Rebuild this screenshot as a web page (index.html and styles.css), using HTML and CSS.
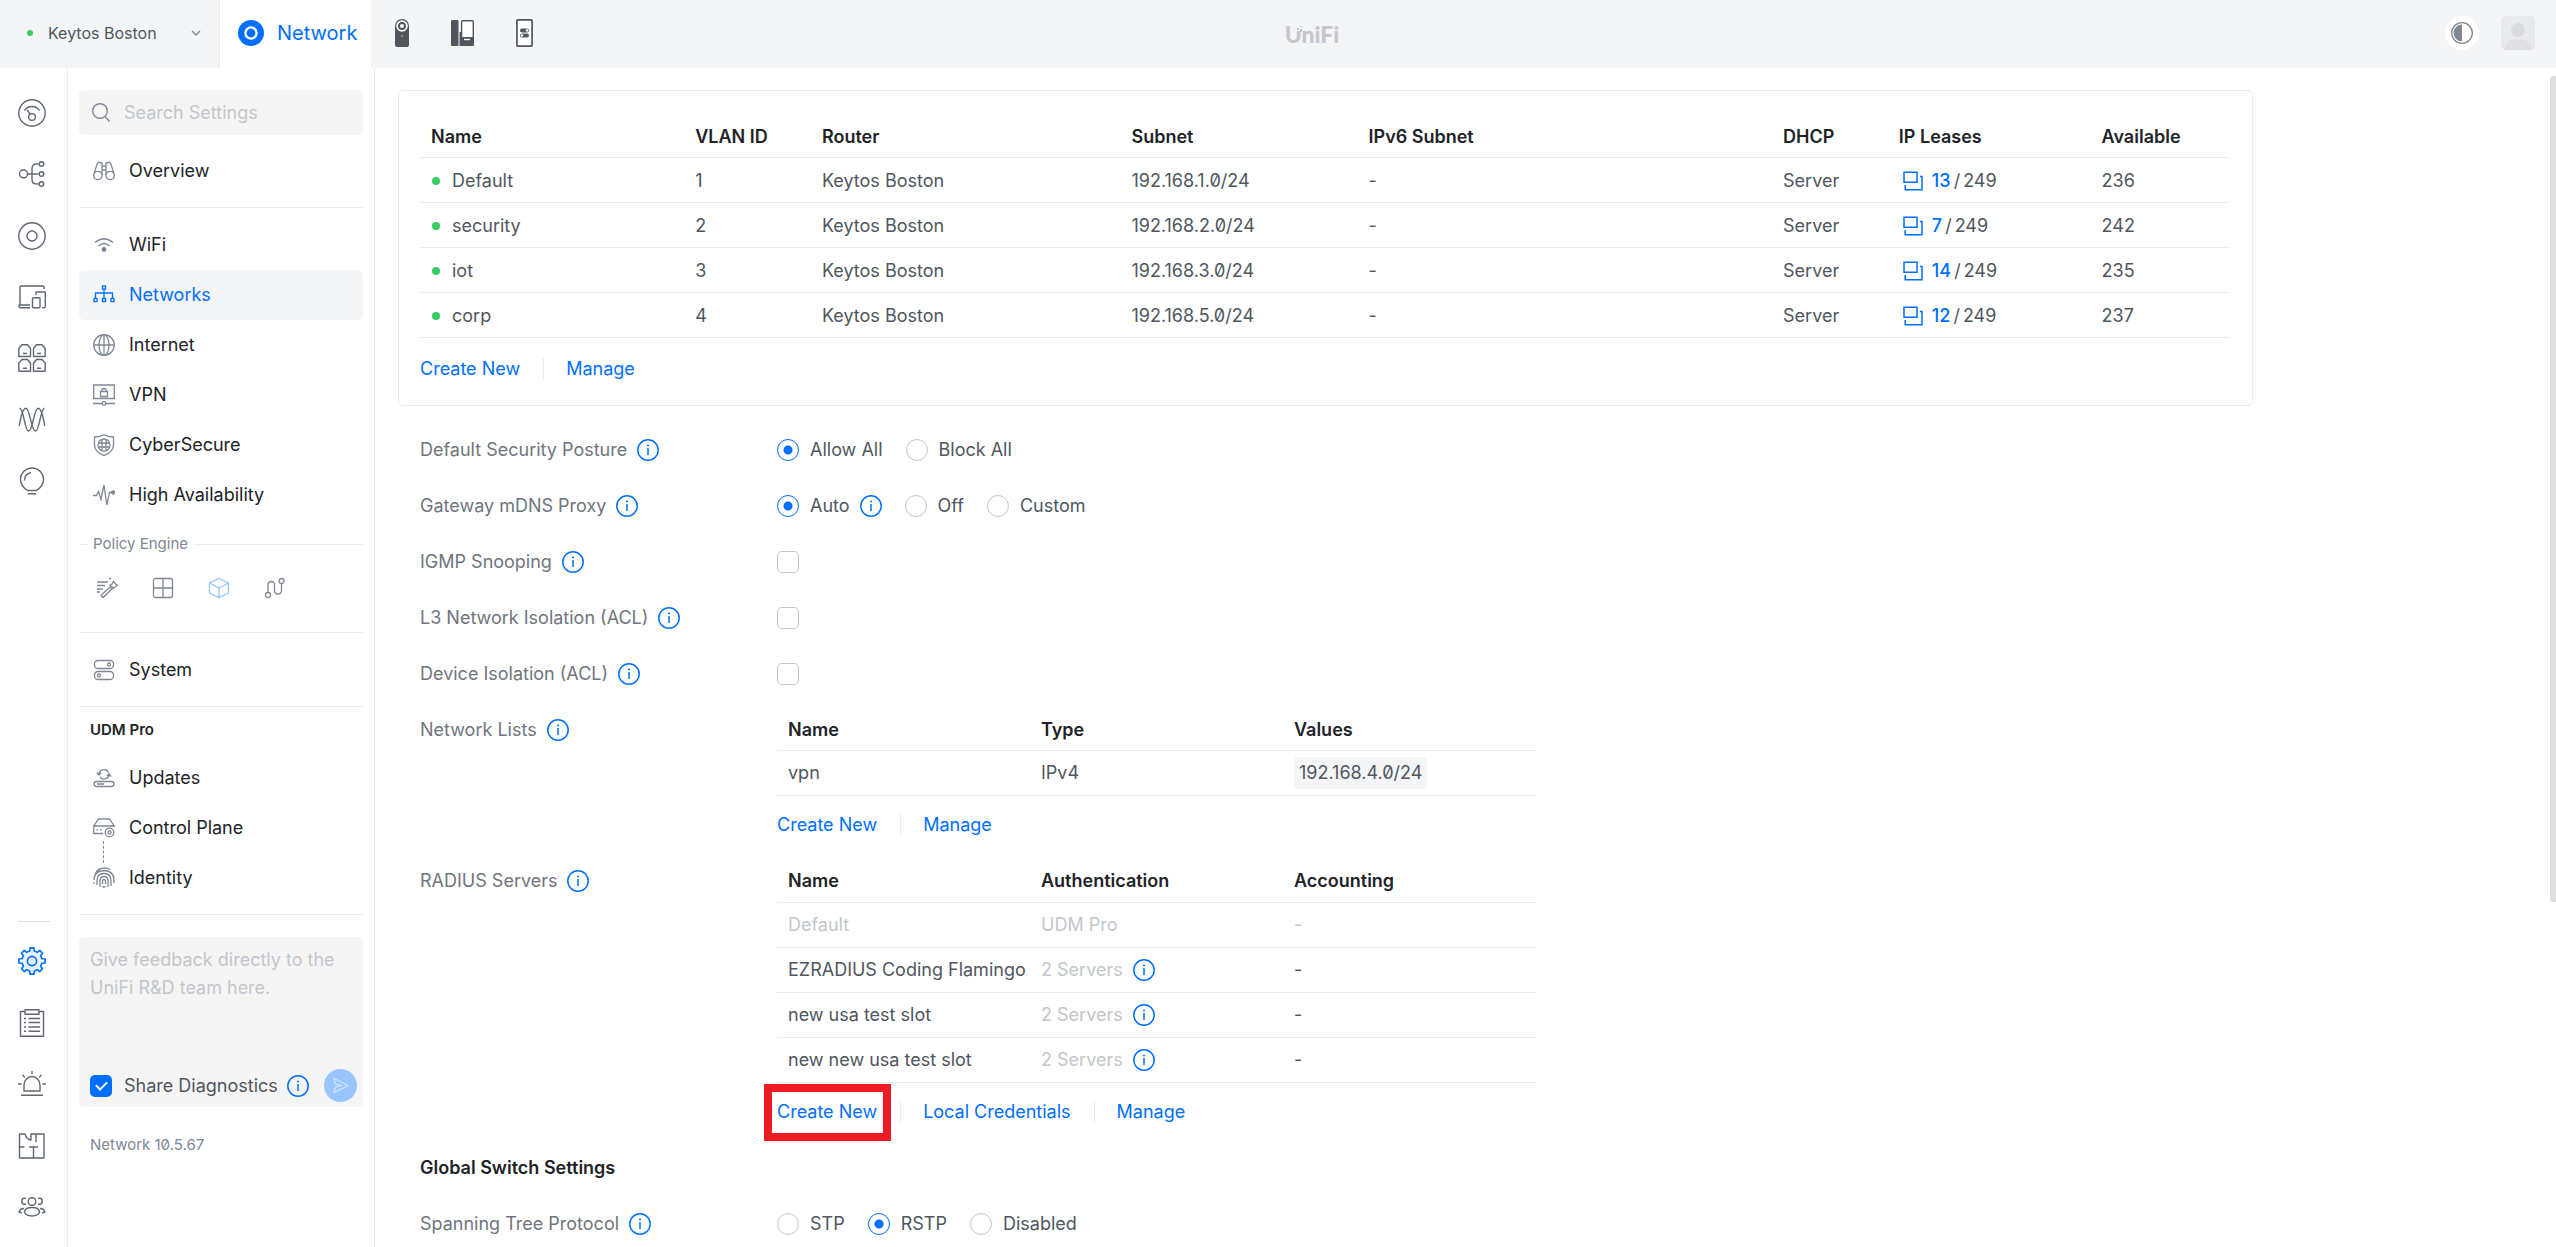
FILE: index.html
```html
<!DOCTYPE html>
<html lang="en">
<head>
<meta charset="utf-8">
<meta name="viewport" content="width=device-width, initial-scale=1">
<title>Networks - UniFi Network</title>
<link rel="stylesheet" href="styles.css">
</head>
<body>
<svg class="sprite" aria-hidden="true">
  <symbol id="i-info" viewBox="0 0 22 22"><circle cx="11" cy="11" r="10.2" fill="none" stroke="currentColor" stroke-width="1.5"/><path d="M11 9v7" stroke="currentColor" stroke-width="1.5"/><circle cx="11" cy="6.4" r="1" fill="currentColor"/></symbol>
  <symbol id="i-lease" viewBox="0 0 20 20"><path d="M1 1.2h13v10H1zM17 5.5h2v13.3H2.2V14" fill="none" stroke="currentColor" stroke-width="1.5"/></symbol>
</svg>

<header class="topbar">
  <button class="site" type="button"><span class="dot dot-small"></span><span class="site-name">Keytos Boston</span>
    <svg width="10" height="6" viewBox="0 0 10 6"><path d="M1 1l4 4 4-4" class="ln"/></svg></button>
  <a class="app-tab" href="#">
    <svg width="26" height="26" viewBox="0 0 26 26"><circle cx="13" cy="13" r="13" fill="#006fff"/><circle cx="13" cy="13" r="5.6" fill="none" stroke="#fff" stroke-width="2.4"/></svg>
    Network</a>
  <nav class="apps" aria-label="Applications">
    <a href="#" aria-label="Protect"><svg width="14" height="28" viewBox="0 0 14 28"><path d="M0 7a7 7 0 0 1 14 0v19q0 2-2 2H2q-2 0-2-2z" fill="#50565e"/><circle cx="7" cy="7" r="5.8" fill="#fff"/><circle cx="7" cy="7" r="3" fill="none" stroke="#50565e" stroke-width="2"/><circle cx="7" cy="17" r=".7" fill="#fff"/></svg></a>
    <a href="#" aria-label="Talk"><svg width="23" height="26" viewBox="0 0 23 26"><rect width="7.5" height="26" rx="1" fill="#50565e"/><path d="M8.5 12v14H22q1 0 1-1V17H10v-5z" fill="#50565e"/><rect x="10.6" y=".7" width="11.7" height="17" rx="1" fill="#fff" stroke="#50565e" stroke-width="1.4"/><path d="M13 19.5h6" stroke="#fff" stroke-width="1.4"/></svg></a>
    <a href="#" aria-label="Access"><svg width="17" height="28" viewBox="0 0 17 28"><rect x=".9" y=".9" width="15.2" height="26.2" rx="1" fill="#fff" stroke="#50565e" stroke-width="1.7"/><rect x="4" y="9.5" width="9" height="4" rx="2" fill="#50565e"/><rect x="4" y="14.5" width="9" height="4" rx="2" fill="#50565e"/><circle cx="11" cy="11.5" r="1.2" fill="#fff"/><circle cx="6" cy="16.5" r="1.2" fill="#fff"/></svg></a>
  </nav>
  <div class="brand"><span class="wordmark">UniFi<svg width="7" height="7" viewBox="0 0 7 7"><path d="M0 0h7v7H0z" fill="#f4f5f7"/><path d="M1 3h2v2H1zM4 1h2v1H4zM4 4h2v3H1V6h3z" fill="#c4c7cc"/></svg></span></div>
  <div class="account">
    <button class="theme" type="button" aria-label="Theme"><svg width="22" height="22" viewBox="0 0 22 22"><circle cx="11" cy="11" r="10.3" fill="#fff" stroke="#808893" stroke-width="1.3"/><path d="M11 2.5a8.5 8.5 0 0 0 0 17z" fill="#808893"/></svg></button>
    <button class="avatar" type="button" aria-label="Account"><svg width="34" height="34" viewBox="0 0 34 34"><rect width="34" height="34" rx="5" fill="#e8e9eb"/><circle cx="17" cy="14" r="7" fill="#d9dbdf"/><path d="M3 34q2-11 14-11t14 11z" fill="#dfe0e3"/></svg></button>
  </div>
</header>

<div class="shell">
  <aside class="rail">
    <nav class="rail-group rail-top" aria-label="Sections">
      <a href="#" aria-label="Dashboard"><svg class="ic" viewBox="0 0 28 28"><circle cx="14" cy="14" r="13.2"/><path d="M6.5 11.5a9 9 0 0 1 15 0M9 11l3.5 4.500"/><circle cx="14" cy="18" r="3.4"/></svg></a>
      <a href="#" aria-label="Topology"><svg class="ic" viewBox="0 0 28 28"><circle cx="5.5" cy="14" r="4"/><path d="M9.5 14h11M20.5 4h-2q-4.5 0-4.5 4.5v11q0 4.5 4.5 4.5h2"/><circle cx="23.5" cy="4" r="2.3"/><circle cx="23.5" cy="14" r="2.3"/><circle cx="23.5" cy="24" r="2.3"/></svg></a>
      <a href="#" aria-label="Devices"><svg class="ic" viewBox="0 0 28 28"><circle cx="14" cy="14" r="13.2"/><circle cx="14" cy="14" r="5"/></svg></a>
      <a href="#" aria-label="Clients"><svg class="ic" viewBox="0 0 28 28"><path d="M26 6V4q0-1-1-1H3Q2 3 2 4v18M12 22H1v1.5q0 1.3 1.5 1.3H12M18 12V9h9.3v14.500q0 1.300-1.500 1.300H24"/><rect x="14.5" y="14.700" width="7.500" height="10.100" rx="1"/></svg></a>
      <a href="#" aria-label="Ports"><svg class="ic" viewBox="0 0 28 28"><path d="M.8 12.5v-8L4 .8h5.500l3 3.700v8zM5 9.500h4M15.500 12.500v-8l3-3.700H24l3.200 3.700v8zM19 9.500h4M.8 27.200v-8L4 15.500h5.500l3 3.700v8zM5 24.200h4M15.500 27.200v-8l3-3.700H24l3.200 3.700v8zM19 24.200h4"/></svg></a>
      <a href="#" aria-label="Radios"><svg class="ic" viewBox="0 0 28 28"><path d="M1.300 20C3 9 5 2.300 8 2.300 12 2.300 13 25 17.500 25 21.500 25 22.500 2.300 26.500 2.300M1.500 2.300C6 2.300 6.500 25 10.500 25 15 25 16 2.300 20 2.300 23 2.300 25 9 26.700 20"/></svg></a>
      <a href="#" aria-label="Insights"><svg class="ic" viewBox="0 0 28 28"><path d="M9.500 23.500Q2.500 19 2.500 12.500a11.500 11.500 0 0 1 23 0q0 6.500-7 11zM6.500 13.500Q6.500 7 13 5.500M10 26.800h8"/></svg></a>
    </nav>
    <nav class="rail-group rail-bottom" aria-label="Tools">
      <a href="#" aria-label="Settings"><svg class="ic ic-on" viewBox="0 0 28 28"><path d="M11.700 4.100L12 .9h4l.3 3.200 3.100 1.200 2.300-1.900 2.900 2.900-1.900 2.300 1.200 3.100 3.200.3v4l-3.200.3-1.200 3.100 1.900 2.300-2.900 2.900-2.300-1.900-3.100 1.200-.3 3.200h-4l-.3-3.200-3.100-1.200-2.300 1.900-2.900-2.900 1.900-2.300-1.200-3.100L.9 16v-4l3.200-.3 1.200-3.100-1.900-2.300 2.900-2.900 2.300 1.900z"/><circle cx="14" cy="14" r="4.600"/></svg></a>
      <a href="#" aria-label="Logs"><svg class="ic" viewBox="0 0 28 28"><path d="M7 2.500H2.500v24.700h23V2.500H21M7 .8h14v4.500H7zM10.500 9.500H22M10.500 13.500H22M10.500 18H22M10.500 22.300H22M6 9.500h2M6 13.500h2M6 18h2M6 22.300h2"/></svg></a>
      <a href="#" aria-label="Alarms"><svg class="ic" viewBox="0 0 28 28"><path d="M6 21v-6a8 8.500 0 0 1 16 0v6zM3 25.300h22M0 14h3.500M24.500 14H28M14 1v3M4.500 5l2.300 2.300M23.500 5l-2.300 2.300"/></svg></a>
      <a href="#" aria-label="Floor plan"><svg class="ic" viewBox="0 0 28 28"><path d="M7 2H1.500v24H26V2H13v6Q8.500 7.500 7 2zM18 2v8M1.500 15h5M11 15h9M15.500 15v11"/></svg></a>
      <a href="#" aria-label="Admins"><svg class="ic" viewBox="0 0 28 28"><circle cx="14" cy="8.500" r="3.800"/><path d="M6.500 19.500Q6.500 14.500 14 14.500t7.500 5Q19.500 23 14 23t-7.500-3.500zM8 5.300H6.500q-2.800 0-2.800 3t2.800 3H8M20 5.300h1.500q2.800 0 2.800 3t-2.800 3H20M6 15.500Q2 15.500 1 19l3 1M22 15.500q4 0 5 3.500l-3 1"/></svg></a>
    </nav>
  </aside>

  <aside class="panel">
    <label class="search">
      <svg width="18" height="19" viewBox="0 0 18 19"><circle cx="8" cy="8" r="7.300" class="ln"/><path d="M13.500 14l4 4.500" class="ln"/></svg>
      <input type="search" placeholder="Search Settings" aria-label="Search Settings">
    </label>
    <nav class="menu first" aria-label="Overview">
      <a href="#"><svg class="ni" viewBox="0 0 22 22"><circle cx="4.800" cy="15.500" r="4.200"/><circle cx="17.200" cy="15.500" r="4.200"/><path d="M1 13.500L4.500 3q2-1.500 4.500 0v12M21 13.500L17.500 3q-2-1.500-4.500 0v12M9 6h4M9 10h4"/></svg>Overview</a>
    </nav>
    <nav class="menu main" aria-label="Settings">
      <a href="#"><svg class="ni" viewBox="0 0 22 22"><path d="M2 8.500q9-7.500 18 0M5.500 12q5.500-5 11 0"/><circle cx="11" cy="15.500" r="1.800" fill="currentColor"/></svg>WiFi</a>
      <a href="#" class="current" aria-current="page"><svg class="ni" viewBox="0 0 22 22"><rect x="9.500" y="2" width="3" height="3"/><rect x="1" y="14.500" width="3" height="3"/><rect x="9.500" y="14.500" width="3" height="3"/><rect x="18" y="14.500" width="3" height="3"/><path d="M11 5v9.500M2.500 14.500V9h17v5.500"/></svg>Networks</a>
      <a href="#"><svg class="ni" viewBox="0 0 22 22"><circle cx="11" cy="11" r="10.300"/><ellipse cx="11" cy="11" rx="5" ry="10.300"/><path d="M.7 11h20.600M11 .7v20.600"/></svg>Internet</a>
      <a href="#"><svg class="ni" viewBox="0 0 22 22"><path d="M.7 1h20.600v13.500H.7zM7.500 7.500h7v5h-7zM9 7.500V6q0-1.500 2-1.500T13 6v1.500M0 19.500h9M13 19.500h9"/><circle cx="11" cy="19.500" r="1.800"/></svg>VPN</a>
      <a href="#"><svg class="ni" viewBox="0 0 22 22"><path d="M11 .8Q15 3 20.500 3v8q0 7-9.500 10.500Q1.500 18 1.500 11V3Q7 3 11 .8z"/><circle cx="11" cy="11" r="6"/><path d="M9 5.500v11M13 5.500v11M5.500 9h11M5.500 13h11"/></svg>CyberSecure</a>
      <a href="#"><svg class="ni" viewBox="0 0 22 22"><path d="M0 11.500h3.500l2-4 2.500 8L11 1l2.800 20L16.500 8.500h3"/><circle cx="20" cy="8.500" r="1.500" fill="currentColor"/></svg>High Availability</a>
    </nav>
    <section class="policy">
      <h2>Policy Engine</h2>
      <div class="policy-links">
        <a href="#" aria-label="Rules"><svg class="ni" viewBox="0 0 22 22"><path d="M1 5h11M1 8.500h8M1 12h6M1 15h3M5 18.500l9-8.500 2 2-9 8.500zM17.500 4.500l2 2.500 2 1-2 1.500-2 2-1.500-2-2-1.500 2-1zM13 1.500h2"/></svg></a>
        <a href="#" aria-label="Table"><svg class="ni" viewBox="0 0 22 22"><rect x="1.500" y="1.500" width="19" height="19" rx="2"/><path d="M11 1.500v19M1.500 11h19"/></svg></a>
        <a href="#" aria-label="Objects" class="soft"><svg class="ni" viewBox="0 0 22 22"><path d="M11 1.500l9.500 4.500v10L11 20.500 1.500 16V6zM1.500 6L11 11l9.500-5M11 11v9.500"/></svg></a>
        <a href="#" aria-label="Routes"><svg class="ni" viewBox="0 0 22 22"><circle cx="4" cy="18" r="2.500"/><circle cx="17.500" cy="4" r="2.500"/><path d="M4 15.500V8q0-3.500 3.300-3.500T10.500 8v5.500q0 3.500 3.500 3.500t3.500-3.500v-7"/></svg></a>
      </div>
    </section>
    <nav class="menu system" aria-label="System">
      <a href="#"><svg class="ni" viewBox="0 0 22 22"><rect x="1.500" y="1.500" width="19" height="8" rx="3.500"/><rect x="1.500" y="12.500" width="19" height="8" rx="3.500"/><circle cx="16" cy="5.500" r="1.500"/><circle cx="6" cy="16.500" r="1.500"/></svg>System</a>
    </nav>
    <section class="console">
      <h2>UDM Pro</h2>
      <nav class="menu" aria-label="UDM Pro">
        <a href="#"><svg class="ni" viewBox="0 0 22 22"><rect x="1" y="14.500" width="20" height="5" rx="2.500"/><path d="M4 17h7M6 8a5 5 0 0 1 9.500-2.500M16 6.500A5 5 0 0 1 7 10M4 5.500l2 2.500 2-2M18 9.500l-2-2.800-2 2"/></svg>Updates</a>
        <a href="#" class="linked"><svg class="ni" viewBox="0 0 22 22"><path d="M10 16.500H.8V9l4.700-7h11l4.700 7v1M.8 9h20.400M3.500 12.800h1.800M7 12.800h1.800"/><circle cx="16.500" cy="15.500" r="4.300"/><circle cx="16.500" cy="15.500" r="1.600"/></svg>Control Plane</a>
        <a href="#"><svg class="ni" viewBox="0 0 22 22"><path d="M2 7q3-6 9.500-6Q15 1 17 2.500M1 13q0-9 10-9.500 10 .5 10 9.500v3M4 18v-4q0-7.500 7-7.500t7 7.500v5M7 20v-6q0-4.500 4-4.500t4 4.500v6M9.500 17v-3q0-1.500 1.500-1.500t1.500 1.500v3M9.500 19q1.500 2.500 3 0M1 15.500V17"/></svg>Identity</a>
      </nav>
    </section>
    <form class="feedback">
      <textarea placeholder="Give feedback directly to the UniFi R&amp;D team here." aria-label="Feedback"></textarea>
      <div class="feedback-foot">
        <input type="checkbox" id="share" checked><label for="share">Share Diagnostics</label>
        <button class="info" type="button" aria-label="About diagnostics"><svg><use href="#i-info"/></svg></button>
        <button class="send" type="button" aria-label="Send"><svg width="17" height="17" viewBox="0 0 17 17"><path d="M2 1.500l14 7-14 7 1.500-5.500L9 8.500 3.500 7z" fill="none" stroke="#cfe3ff" stroke-width="1.300"/></svg></button>
      </div>
    </form>
    <p class="version">Network 10.5.67</p>
  </aside>

  <main class="content">
    <section class="card">
      <table class="networks">
        <colgroup><col class="c1"><col class="c2"><col class="c3"><col class="c4"><col class="c5"><col class="c6"><col class="c7"><col class="c8"></colgroup>
        <thead><tr><th>Name</th><th>VLAN ID</th><th>Router</th><th>Subnet</th><th>IPv6 Subnet</th><th>DHCP</th><th>IP Leases</th><th>Available</th></tr></thead>
        <tbody>
          <tr><td><span class="dot"></span>Default</td><td>1</td><td>Keytos Boston</td><td>192.168.1.0/24</td><td>-</td><td>Server</td><td><div class="lease"><a href="#"><svg><use href="#i-lease"/></svg>13</a><span>/</span><span>249</span></div></td><td>236</td></tr>
          <tr><td><span class="dot"></span>security</td><td>2</td><td>Keytos Boston</td><td>192.168.2.0/24</td><td>-</td><td>Server</td><td><div class="lease"><a href="#"><svg><use href="#i-lease"/></svg>7</a><span>/</span><span>249</span></div></td><td>242</td></tr>
          <tr><td><span class="dot"></span>iot</td><td>3</td><td>Keytos Boston</td><td>192.168.3.0/24</td><td>-</td><td>Server</td><td><div class="lease"><a href="#"><svg><use href="#i-lease"/></svg>14</a><span>/</span><span>249</span></div></td><td>235</td></tr>
          <tr><td><span class="dot"></span>corp</td><td>4</td><td>Keytos Boston</td><td>192.168.5.0/24</td><td>-</td><td>Server</td><td><div class="lease"><a href="#"><svg><use href="#i-lease"/></svg>12</a><span>/</span><span>249</span></div></td><td>237</td></tr>
        </tbody>
      </table>
      <div class="links"><a href="#">Create New</a><a href="#">Manage</a></div>
    </section>

    <div class="fields">
      <div class="field">
        <div class="name">Default Security Posture<button class="info" type="button" aria-label="About security posture"><svg><use href="#i-info"/></svg></button></div>
        <div class="options">
          <label><input type="radio" name="posture" checked>Allow All</label>
          <label><input type="radio" name="posture">Block All</label>
        </div>
      </div>
      <div class="field">
        <div class="name">Gateway mDNS Proxy<button class="info" type="button" aria-label="About mDNS proxy"><svg><use href="#i-info"/></svg></button></div>
        <div class="options">
          <div class="option"><label><input type="radio" name="mdns" checked>Auto</label><button class="info" type="button" aria-label="About auto"><svg><use href="#i-info"/></svg></button></div>
          <label><input type="radio" name="mdns">Off</label>
          <label><input type="radio" name="mdns">Custom</label>
        </div>
      </div>
      <div class="field">
        <div class="name"><label for="igmp">IGMP Snooping</label><button class="info" type="button" aria-label="About IGMP snooping"><svg><use href="#i-info"/></svg></button></div>
        <input type="checkbox" id="igmp">
      </div>
      <div class="field">
        <div class="name"><label for="l3">L3 Network Isolation (ACL)</label><button class="info" type="button" aria-label="About network isolation"><svg><use href="#i-info"/></svg></button></div>
        <input type="checkbox" id="l3">
      </div>
      <div class="field">
        <div class="name"><label for="device">Device Isolation (ACL)</label><button class="info" type="button" aria-label="About device isolation"><svg><use href="#i-info"/></svg></button></div>
        <input type="checkbox" id="device">
      </div>
      <div class="field">
        <div class="name">Network Lists<button class="info" type="button" aria-label="About network lists"><svg><use href="#i-info"/></svg></button></div>
        <div class="block">
          <table class="small">
            <thead><tr><th>Name</th><th>Type</th><th>Values</th></tr></thead>
            <tbody><tr><td>vpn</td><td>IPv4</td><td><span class="chip">192.168.4.0/24</span></td></tr></tbody>
          </table>
          <div class="links"><a href="#">Create New</a><a href="#">Manage</a></div>
        </div>
      </div>
      <div class="field">
        <div class="name">RADIUS Servers<button class="info" type="button" aria-label="About RADIUS servers"><svg><use href="#i-info"/></svg></button></div>
        <div class="block">
          <table class="small">
            <thead><tr><th>Name</th><th>Authentication</th><th>Accounting</th></tr></thead>
            <tbody>
              <tr class="muted"><td>Default</td><td>UDM Pro</td><td>-</td></tr>
              <tr><td>EZRADIUS Coding Flamingo</td><td><span class="servers">2 Servers<button class="info" type="button" aria-label="Show servers"><svg><use href="#i-info"/></svg></button></span></td><td>-</td></tr>
              <tr><td>new usa test slot</td><td><span class="servers">2 Servers<button class="info" type="button" aria-label="Show servers"><svg><use href="#i-info"/></svg></button></span></td><td>-</td></tr>
              <tr><td>new new usa test slot</td><td><span class="servers">2 Servers<button class="info" type="button" aria-label="Show servers"><svg><use href="#i-info"/></svg></button></span></td><td>-</td></tr>
            </tbody>
          </table>
          <div class="links"><a href="#" class="marked">Create New</a><a href="#">Local Credentials</a><a href="#">Manage</a></div>
        </div>
      </div>
      <h2 class="heading">Global Switch Settings</h2>
      <div class="field">
        <div class="name">Spanning Tree Protocol<button class="info" type="button" aria-label="About spanning tree"><svg><use href="#i-info"/></svg></button></div>
        <div class="options">
          <label><input type="radio" name="stp">STP</label>
          <label><input type="radio" name="stp" checked>RSTP</label>
          <label><input type="radio" name="stp">Disabled</label>
        </div>
      </div>
    </div>
    <div class="thumb"></div>
  </main>
</div>
</body>
</html>
```
FILE: styles.css
```css
* { box-sizing: border-box; }

body {
  margin: 0;
  height: 100vh;
  overflow: hidden;
  display: flex;
  flex-direction: column;
  font: 18px/28px Inter, "Liberation Sans", sans-serif;
  font-feature-settings: "zero";
  color: #50565e;
  background: #fff;
}

a { color: #006fff; text-decoration: none; }
button { font: inherit; color: inherit; background: none; border: 0; padding: 0; }
h2, p { margin: 0; }
svg { flex: none; display: block; }
.sprite { position: absolute; width: 0; height: 0; }
.ln { fill: none; stroke: #808893; stroke-width: 1.4; }

.dot { display: inline-block; flex: none; width: 8px; height: 8px; border-radius: 50%; background: #38cc65; }
.dot-small { width: 6px; height: 6px; }

/* top bar */
.topbar { flex: none; height: 68px; display: flex; align-items: center; background: #f4f5f7; position: relative; }
.site { width: 220px; height: 68px; display: flex; align-items: center; padding: 0 18px 2px 27px; font-size: 16px; border-right: 1px solid #ebecee; }
.site-name { flex: 1; text-align: left; margin-left: 15px; }
.app-tab { height: 68px; width: 151px; display: flex; align-items: center; gap: 13px; padding: 0 0 2px 18px; background: #fff; font-size: 20px; }
.apps { display: flex; align-items: center; gap: 42px; margin-left: 24px; padding-bottom: 2px; }
.brand { position: absolute; left: 68px; right: 0; display: flex; justify-content: center; pointer-events: none; }
.wordmark { position: relative; font: 900 23px/28px Lato, sans-serif; color: #c4c7cc; }
.wordmark svg { position: absolute; left: 11px; top: 5px; }
.account { margin-left: auto; display: flex; gap: 22px; margin-right: 21px; padding-bottom: 2px; }
.theme { width: 34px; height: 34px; border-radius: 50%; background: #fff; display: grid; place-items: center; }

/* page frame */
.shell { flex: 1; min-height: 0; display: flex; }
.rail { flex: none; width: 68px; border-right: 1px solid #ebecee; display: flex; flex-direction: column; justify-content: space-between; padding: 31px 0 26px 18px; color: #5f6772; }
.rail a { color: inherit; }
.rail-group { display: flex; flex-direction: column; justify-content: space-between; }
.rail-top { height: 396px; }
.rail-bottom { height: 300px; padding-top: 26px; background: linear-gradient(#dcdee1, #dcdee1) no-repeat 0 0 / 32px 1px; }
.ic { width: 28px; height: 28px; fill: none; stroke: currentColor; stroke-width: 1.4; stroke-linejoin: round; }
.ic-on { stroke: #006fff; stroke-width: 1.6; fill: #e5f1ff; }

/* settings menu */
.panel { flex: none; width: 307px; border-right: 1px solid #ebecee; padding: 22px 11px 0; overflow: hidden; }
.search { height: 45px; display: flex; align-items: center; gap: 14px; padding: 0 13px; background: #f5f5f6; border-radius: 5px; }
input[type=search] { flex: 1; min-width: 0; border: 0; padding: 0; outline: 0; background: none; font: inherit; color: #50565e; }
::placeholder { color: #c2c6cc; opacity: 1; }
.menu a { display: flex; align-items: center; gap: 14px; height: 50px; padding-left: 14px; border-radius: 5px; color: #212327; }
.menu a.current { background: #f4f5f7; color: #006fff; }
.first { padding: 11px 0; border-bottom: 1px solid #ebecee; }
.main { padding: 12px 0 11px; }
.ni { width: 22px; height: 22px; fill: none; stroke: currentColor; stroke-width: 1.3; color: #808893; }
.current .ni { color: #006fff; }
.soft .ni { color: #99c5ff; }
.policy { border-bottom: 1px solid #ebecee; height: 102px; }
.policy h2 { display: flex; align-items: center; gap: 6px; font-size: 15px; line-height: 26px; font-weight: 400; color: #808893; }
.policy h2::before { content: ""; width: 8px; height: 1px; background: #ebecee; }
.policy h2::after { content: ""; flex: 1; height: 1px; background: #ebecee; }
.policy-links { display: flex; gap: 34px; padding: 20px 0 0 17px; }
.system { padding: 12px 0 11px; border-bottom: 1px solid #ebecee; }
.console { border-bottom: 1px solid #ebecee; padding: 10px 0 11px; }
.console h2 { font-size: 15px; line-height: 26px; font-weight: 600; color: #212327; padding: 0 0 10px 11px; }
.linked { position: relative; }
.linked::after { content: ""; position: absolute; left: 24px; top: 38px; height: 22px; border-left: 1px dashed #808893; }
.feedback { margin-top: 22px; height: 170px; display: flex; flex-direction: column; background: #f5f5f6; border-radius: 5px; }
textarea { flex: 1; border: 0; padding: 9px 11px 0; outline: 0; resize: none; background: none; font: inherit; }
.feedback-foot { display: flex; align-items: center; padding: 0 6px 5px 11px; }
.feedback-foot label { margin-left: 12px; }
.feedback-foot .info { margin-left: 9px; }
.send { width: 33px; height: 33px; margin-left: auto; border-radius: 50%; background: #99c5ff; display: grid; place-items: center; }
.version { padding: 24px 11px; font-size: 15px; color: #808893; }

/* form controls */
.info { flex: none; color: #006fff; }
.info svg { width: 22px; height: 22px; }
input[type=checkbox], input[type=radio] { appearance: none; flex: none; width: 22px; height: 22px; margin: 0; border: 1px solid #c2c6cc; background: #fff; }
input[type=checkbox] { border-radius: 5px; }
input[type=checkbox]:checked { border: 0; background: #006fff; display: grid; place-items: center; }
input[type=checkbox]:checked::after { content: ""; width: 5px; height: 9px; margin-bottom: 3px; border: solid #fff; border-width: 0 2px 2px 0; transform: rotate(45deg); }
input[type=radio] { border-radius: 50%; }
input[type=radio]:checked { border-color: #006fff; background: radial-gradient(circle, #006fff 4px, #fff 5px); }

/* content */
.content { flex: 1; min-width: 0; position: relative; padding: 22px 23px 0; overflow: hidden; }
.thumb { position: absolute; right: 0; top: 8px; width: 6px; height: 826px; border-radius: 3px 0 0 3px; background: #dedfe3; }
.card { max-width: 1855px; border: 1px solid #ebecee; border-radius: 5px; padding: 21px 22px 22px 21px; }
table { width: 100%; table-layout: fixed; border-collapse: collapse; }
th, td { height: 45px; padding: 2px 0 0 11px; text-align: left; white-space: nowrap; border-bottom: 1px solid #ebecee; }
th { padding-top: 5px; font-weight: 600; color: #212327; }
td .dot { margin: 0 12px 2px 1px; }
.c1 { width: 14.6%; } .c2 { width: 7%; } .c3 { width: 17.1%; } .c4 { width: 13.1%; }
.c5 { width: 22.9%; } .c6 { width: 6.4%; } .c7 { width: 11.2%; } .c8 { width: 7.7%; }
.lease { display: flex; align-items: center; gap: 3px; padding-left: 4px; }
.lease a { display: flex; align-items: center; gap: 9px; font-weight: 500; }
.lease svg { width: 20px; height: 20px; }
.links { display: flex; align-items: center; margin-top: 15px; }
.card .links { margin-top: 17px; }
.links a + a { margin-left: 23px; padding-left: 23px; background: linear-gradient(#ebecee, #ebecee) no-repeat 0 50% / 1px 22px; }

.fields { max-width: 1162px; padding: 30px 0 0 22px; display: flex; flex-direction: column; gap: 28px; }
.field { display: grid; grid-template-columns: 357px minmax(0, 1fr); align-items: start; }
.name { display: flex; align-items: center; gap: 10px; color: #70757d; }
.field > input { margin-top: 3px; }
.options { display: flex; gap: 23px; }
.options label { display: flex; align-items: center; gap: 11px; }
.option { display: flex; align-items: center; gap: 10px; }
.small { max-width: 759px; }
.small th { height: 35px; padding-top: 0; vertical-align: top; }
.muted, .servers { color: #c2c6cc; }
.servers { display: flex; align-items: center; gap: 10px; }
.chip { display: inline-block; padding: 2px 5px; border-radius: 4px; background: #f4f5f7; }
.small td { padding-top: 0; }
.marked { position: relative; }
.marked::after { content: ""; position: absolute; inset: -14px -14px -15px -13px; border: 8px solid #ed1c24; }
.heading { font-size: 18px; line-height: 28px; font-weight: 600; color: #212327; }
```
